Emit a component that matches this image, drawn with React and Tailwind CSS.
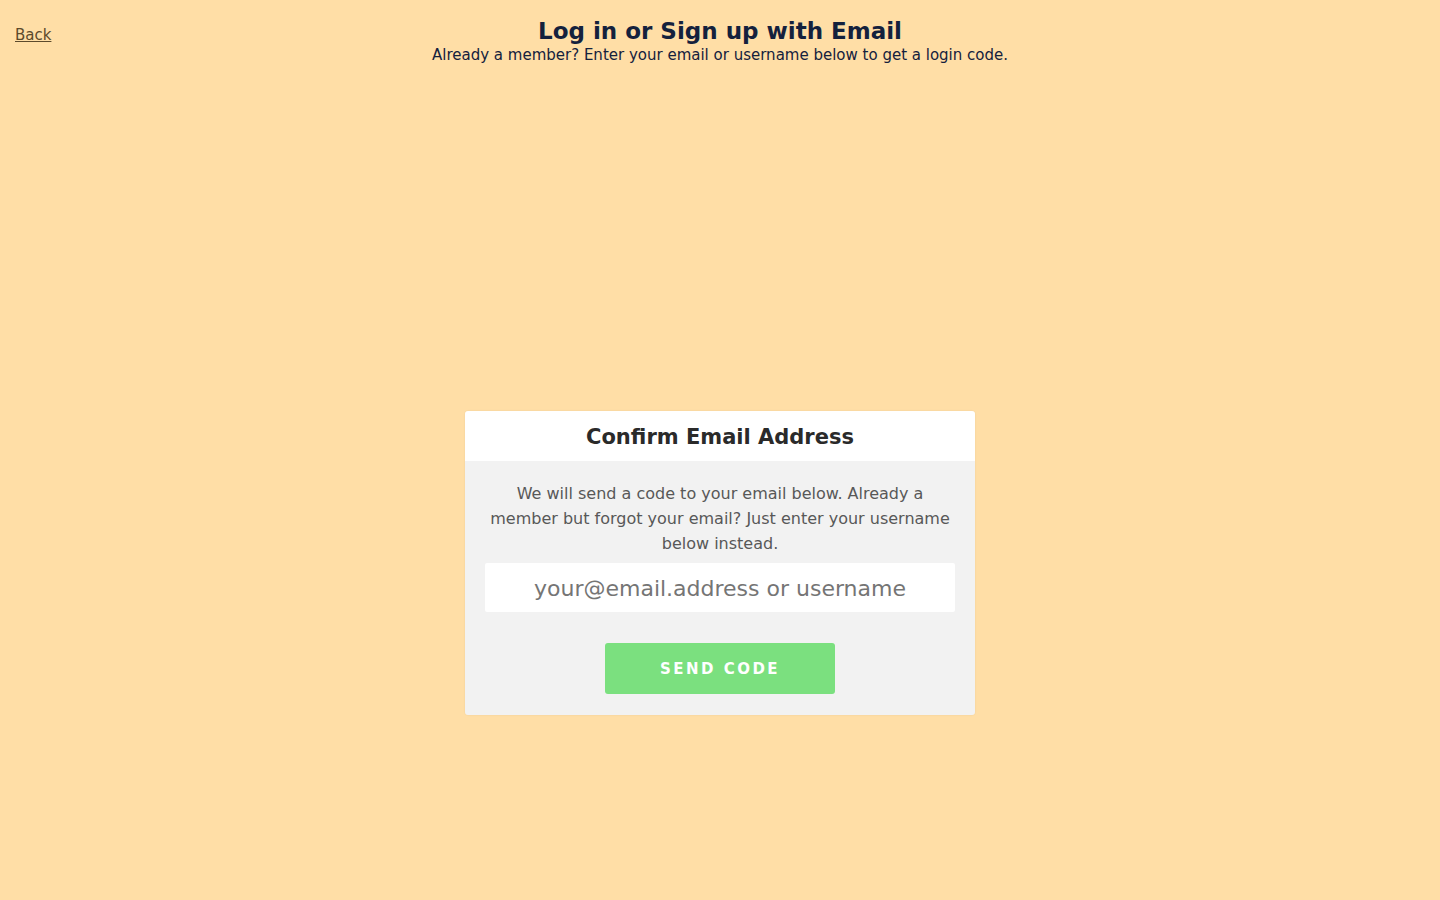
import { useState } from "react";

function App() {
  const [value, setValue] = useState("");

  return (
    <div
      className="min-h-screen bg-[#ffdea6] relative"
      style={{ fontFamily: '"DejaVu Sans", Verdana, sans-serif' }}
    >
      <a
        href="#"
        className="absolute left-[15px] top-[24px] text-[15px] text-[#5c4a2c] underline"
      >
        Back
      </a>

      <div className="pt-[16px] text-center text-[#14213d]">
        <h1 className="text-[23px] font-bold leading-[30px]">
          Log in or Sign up with Email
        </h1>
        <p className="text-[15px] leading-[18px]">
          Already a member? Enter your email or username below to get a login code.
        </p>
      </div>

      <div className="flex justify-center pt-[347px]">
        <div className="w-[510px] rounded-[3px] overflow-hidden shadow-[0_0_2px_rgba(0,0,0,0.08)]">
          <div className="bg-white h-[50px] pt-[4px] flex items-center justify-center">
            <h2 className="text-[21px] font-bold text-[#2a2a2a]">
              Confirm Email Address
            </h2>
          </div>
          <div className="bg-[#f2f2f2] px-[20px] pt-[20px] pb-[21px]">
            <p className="text-center text-[16px] leading-[25px] text-[#585858]">
              We will send a code to your email below. Already a member but forgot your email? Just enter your username below instead.
            </p>
            <input
              type="text"
              value={value}
              onChange={(e) => setValue(e.target.value)}
              placeholder="your@email.address or username"
              className="mt-[7px] w-full h-[49px] pt-[2px] bg-white rounded-[2px] text-center text-[22px] text-[#333] placeholder:text-[#757575] outline-none"
            />
            <div className="flex justify-center mt-[31px]">
              <button className="w-[230px] h-[51px] pt-[2px] rounded-[3px] bg-[#7be07f] text-white font-bold text-[15px] tracking-[2.5px]">
                SEND CODE
              </button>
            </div>
          </div>
        </div>
      </div>
    </div>
  );
}

export default App;
